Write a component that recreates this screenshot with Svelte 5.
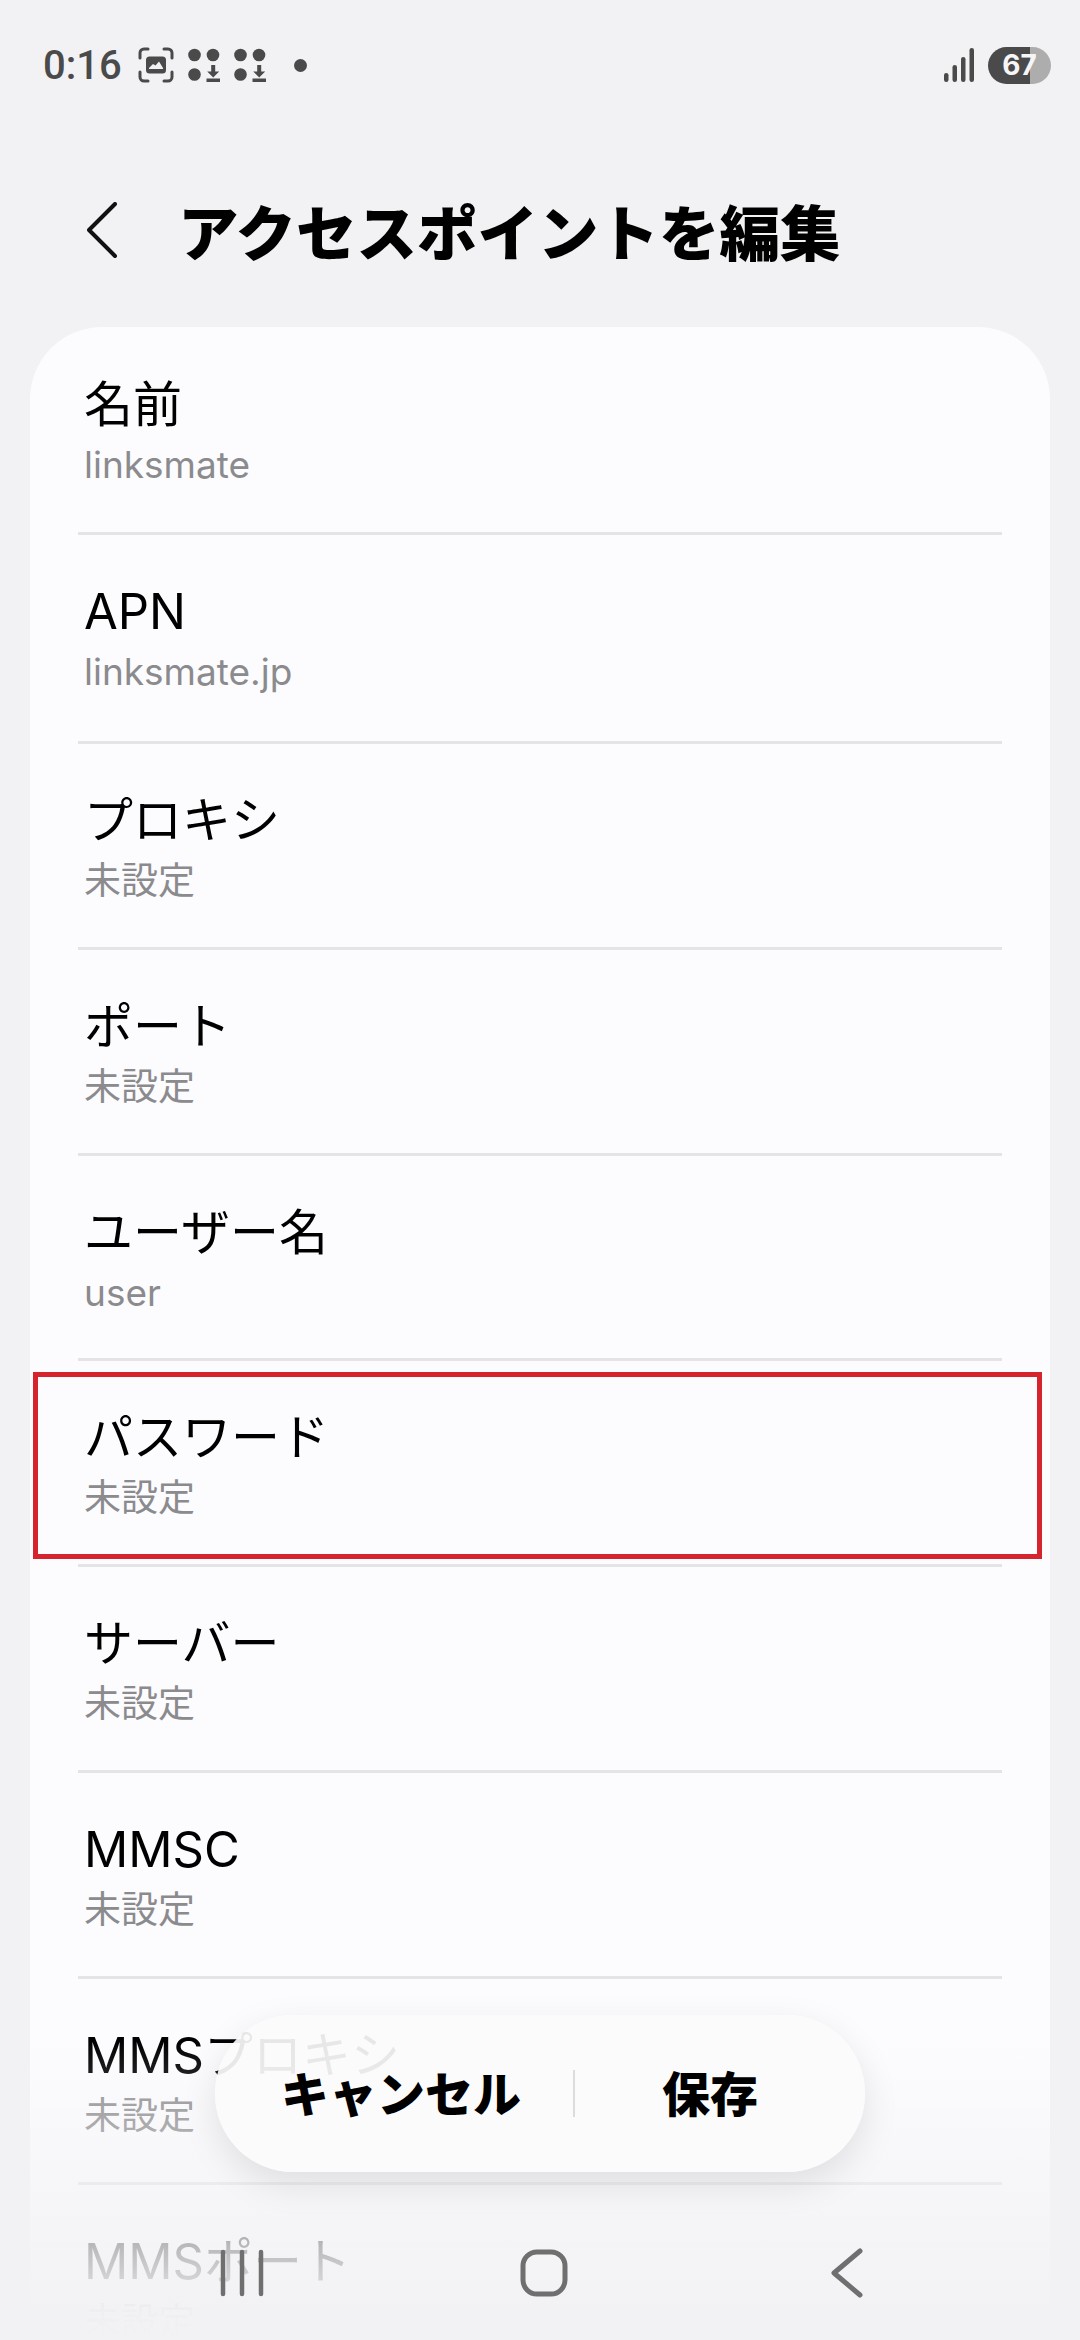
<script>
  const rows = [
    { title: '名前', value: 'linksmate' },
    { title: 'APN', value: 'linksmate.jp' },
    { title: 'プロキシ', value: '未設定' },
    { title: 'ポート', value: '未設定' },
    { title: 'ユーザー名', value: 'user' },
    { title: 'パスワード', value: '未設定' },
    { title: 'サーバー', value: '未設定' },
    { title: 'MMSC', value: '未設定' },
    { title: 'MMSプロキシ', value: '未設定' },
    { title: 'MMSポート', value: '未設定' }
  ];
</script>

<div class="screen">
  <div class="status">
    <span class="time">0:16</span>
    <svg width="36" height="36" viewBox="0 0 36 36" fill="none">
      <path d="M2 11V6a4 4 0 0 1 4-4h4M26 2h4a4 4 0 0 1 4 4v5M34 25v5a4 4 0 0 1-4 4h-4M10 34H6a4 4 0 0 1-4-4v-5" stroke="#4a4a4a" stroke-width="3" stroke-linecap="round"/>
      <rect x="8" y="9.500" width="20" height="17" rx="3.500" fill="#4a4a4a"/>
      <path d="M11 21l4-4 2.500 1.500 3.500-4 4 6.500v1H11z" fill="#f1f1f3"/>
    </svg>
    {#each [0, 1] as i}
      <svg class="dl" width="32" height="34" viewBox="0 0 32 34" fill="#4a4a4a">
        <circle cx="6.500" cy="7" r="6.300" />
        <circle cx="25" cy="7" r="6.300" />
        <circle cx="6.500" cy="26.500" r="6.300" />
        <path d="M23.200 17h4v6.500h4l-6 6-6-6h4zM18.500 30.500h13.500V34H18.500z" />
      </svg>
    {/each}
    <span class="dot"></span>
    <span class="grow"></span>
    <svg width="30" height="34" viewBox="0 0 30 34" fill="#4a4a4a">
      <rect x="0" y="25" width="4.500" height="9" rx="2.200" />
      <rect x="8.500" y="17" width="4.500" height="17" rx="2.200" />
      <rect x="17" y="9" width="4.500" height="25" rx="2.200" />
      <rect x="25.500" y="0" width="4.500" height="34" rx="2.200" />
    </svg>
    <span class="battery"><span class="level">67</span></span>
  </div>

  <header>
    <svg width="30" height="56" viewBox="0 0 30 56" fill="none">
      <path d="M28 2L2 28l26 26" stroke="#111" stroke-width="4" stroke-linecap="round" stroke-linejoin="round"/>
    </svg>
    <h1>アクセスポイントを編集</h1>
  </header>

  <section class="card">
    {#each rows as row}
      <div class="row">
        <div class="title">{row.title}</div>
        <div class="value">{row.value}</div>
      </div>
    {/each}
  </section>

  <div class="mark"></div>

  <div class="fade"></div>

  <div class="actions">
    <span class="act left">キャンセル</span>
    <span class="sep"></span>
    <span class="act right">保存</span>
  </div>

  <nav>
    <svg width="44" height="48" viewBox="0 0 44 48" fill="none" stroke="#6f6f6f" stroke-width="4.500" stroke-linecap="round">
      <path d="M3 3v42M22 3v42M41 3v42" />
    </svg>
    <svg class="home" width="48" height="48" viewBox="0 0 48 48" fill="none">
      <rect x="3" y="3" width="42" height="42" rx="14" stroke="#6f6f6f" stroke-width="5" />
    </svg>
    <svg class="back" width="32" height="50" viewBox="0 0 32 50" fill="none">
      <path d="M29 3L3 25l26 22" stroke="#6f6f6f" stroke-width="5" stroke-linecap="round" stroke-linejoin="round"/>
    </svg>
  </nav>
</div>

<style>
  :global(body) {
    background: #f2f2f4;
  }

  .screen {
    position: relative;
    width: 1080px;
    height: 2340px;
    overflow: hidden;
    background: #f2f2f4;
    font-family: 'Noto Sans CJK JP', sans-serif;
    color: #0a0a0a;
  }

  .status {
    display: flex;
    align-items: center;
    height: 50px;
    padding: 40px 29px 0 43px;
    color: #4a4a4a;
  }

  .time {
    font-family: Roboto, sans-serif;
    font-size: 40px;
    font-weight: 500;
    margin-right: 16px;
  }

  .dl {
    margin-left: 14px;
  }

  .dot {
    width: 13px;
    height: 13px;
    border-radius: 50%;
    background: #4a4a4a;
    margin-left: 28px;
  }

  .grow {
    flex: 1;
  }

  .battery {
    display: block;
    width: 63px;
    height: 37px;
    margin-left: 14px;
    border-radius: 19px;
    background: linear-gradient(90deg, #4a4a4a 67%, #adadad 67%);
  }

  .level {
    display: block;
    text-align: center;
    font-family: Inter, sans-serif;
    font-size: 28px;
    font-weight: 700;
    line-height: 37px;
    color: #f6f6f6;
  }

  header {
    display: flex;
    align-items: center;
    gap: 61px;
    padding: 112px 0 0 87px;
    height: 56px;
  }

  h1 {
    margin: 0;
    font-size: 60.5px;
    font-weight: 900;
    line-height: 56px;
    color: #000;
  }

  .card {
    margin: 69px 30px 0;
    background: #fcfcfe;
    border-radius: 72px 72px 0 0;
    padding: 0 48px;
  }

  .row {
    box-sizing: border-box;
    height: 205.8px;
    padding: 46px 6px 0;
    border-bottom: 3px solid #e4e4e6;
  }

  .row:nth-child(1) {
    height: 208px;
    padding-top: 47px;
  }

  .row:nth-child(2) {
    height: 209px;
  }

  .title {
    font-size: 49px;
    line-height: 62px;
    font-family: Inter, 'Noto Sans CJK JP', sans-serif;
    color: #000;
  }

  .value {
    font-size: 37px;
    line-height: 58px;
    color: #8b8b8e;
    font-family: Inter, 'Noto Sans CJK JP', sans-serif;
  }

  .mark {
    position: absolute;
    left: 33px;
    top: 1372px;
    width: 1009px;
    height: 187px;
    box-sizing: border-box;
    border: 5px solid #d6242f;
  }

  .fade {
    position: absolute;
    left: 0;
    right: 0;
    bottom: 0;
    height: 300px;
    background: linear-gradient(180deg, rgba(242, 242, 244, 0) 0%, rgba(242, 242, 244, 0.78) 70%, rgba(242, 242, 244, 0.97) 90%, #f2f2f4 100%);
  }

  .actions {
    position: absolute;
    left: 215px;
    top: 2015px;
    display: flex;
    align-items: center;
    width: 650px;
    height: 157px;
    border-radius: 78px;
    background: rgba(251, 251, 252, 0.92);
    box-shadow: 0 12px 36px rgba(0, 0, 0, 0.1);
  }

  .act {
    box-sizing: border-box;
    font-size: 48px;
    font-weight: 900;
    line-height: 60px;
    color: #000;
    text-align: center;
    margin-bottom: 6px;
  }

  .left {
    width: 358px;
    padding-left: 14px;
  }

  .right {
    flex: 1;
    padding-right: 20px;
  }

  .sep {
    width: 2px;
    height: 47px;
    background: #dcdcde;
  }

  nav {
    position: absolute;
    left: 220px;
    top: 2248px;
    display: flex;
    align-items: center;
  }

  .home {
    margin-left: 256px;
  }

  .back {
    margin-left: 263px;
  }
</style>
